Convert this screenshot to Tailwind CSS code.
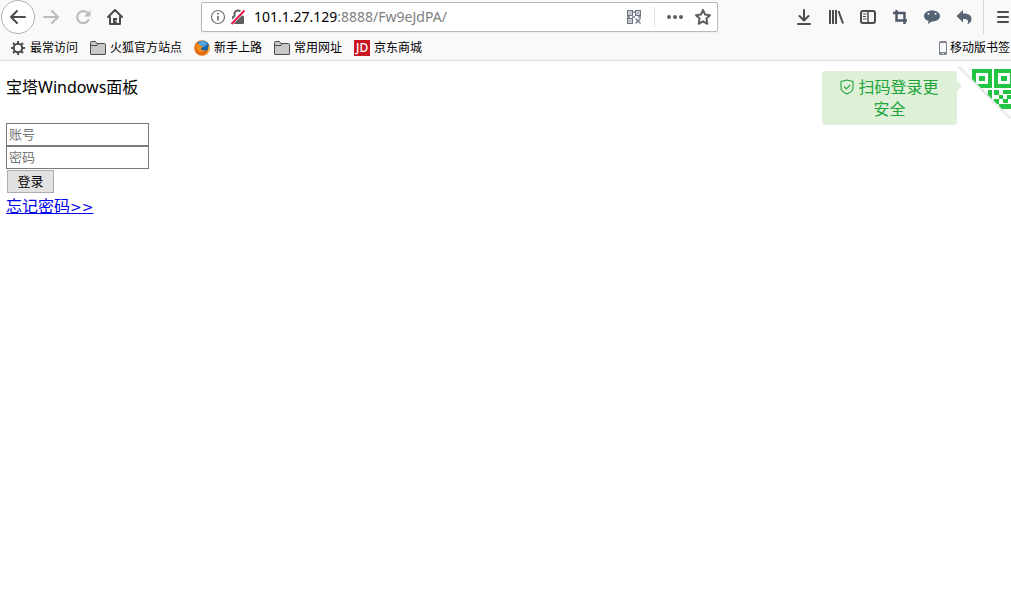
<!DOCTYPE html>
<html lang="zh-CN">

<head>
  <meta charset="UTF-8">
  <meta name="viewport" content="width=device-width, initial-scale=1.0">
  <title>宝塔Windows面板</title>
  <script src="https://cdn.jsdelivr.net/npm/@tailwindcss/browser@4"></script>
</head>

<body class="bg-white text-black font-['Noto_Sans','Noto_Sans_CJK_SC',sans-serif]">
  <!-- Browser toolbar -->
  <header class="bg-[#f9f9fa] border-b border-[#e0e0e1]">
    <div class="flex items-center h-[34px] pl-px text-[#4c4c4e]">
      <nav class="flex items-center">
        <button aria-label="后退" class="flex items-center justify-center size-[34px] rounded-full bg-white border border-[#b1b1b3]">
          <svg class="size-4" viewBox="0 0 16 16" fill="none" stroke="currentColor" stroke-width="2" stroke-linecap="round" stroke-linejoin="round"><path d="M15 8H1.5M7 2 1 8l6 6" /></svg>
        </button>
        <button aria-label="前进" class="flex items-center justify-center w-8 h-8 text-[#bcbcbd]">
          <svg class="size-4" viewBox="0 0 16 16" fill="none" stroke="currentColor" stroke-width="2" stroke-linecap="round" stroke-linejoin="round"><path d="M1 8h13.500M9 2l6 6-6 6" /></svg>
        </button>
        <button aria-label="刷新" class="flex items-center justify-center w-8 h-8 text-[#bcbcbd]">
          <svg class="size-4" viewBox="0 0 16 16" fill="none" stroke="currentColor" stroke-width="2.200" stroke-linecap="round"><path d="M13.500 11A6 6 0 1 1 12.500 4" /><path d="M15.500 1v6.500H9z" fill="currentColor" stroke="none" /></svg>
        </button>
        <button aria-label="主页" class="flex items-center justify-center w-8 h-8">
          <svg class="size-4" viewBox="0 0 16 16" fill="none" stroke="currentColor" stroke-width="2" stroke-linecap="round" stroke-linejoin="round"><path d="M1 8l7-7 7 7M3 8v7h10V8" /><path d="M6 15V9h4v6z" fill="currentColor" stroke="none" /><path d="M9 11.500v1" stroke="#fff" stroke-width="1" /></svg>
        </button>
      </nav>

      <div class="flex flex-1 items-center h-[30px] mx-[70px] pl-2 pr-1.5 bg-white border border-[#b8b8ba] rounded-xs shadow-xs">
        <svg class="size-4" viewBox="0 0 16 16" fill="none" stroke="#737373" stroke-width="1.200"><circle cx="8" cy="8" r="6.500" /><path d="M8 7v4.500M8 4v1.600" stroke-width="1.800" /></svg>
        <svg class="size-4 ml-1" viewBox="0 0 16 16" fill="none"><path d="M4.500 8V5a3.500 3.500 0 0 1 7 0v3" stroke="#5e5e60" stroke-width="2" /><rect x="2" y="7" width="12" height="8" rx="1" fill="#5e5e60" /><path d="M1 14.500 14 1.500" stroke="#fff" stroke-width="4" /><path d="M1.500 15 14.500 1.500" stroke="#e8194b" stroke-width="2" /></svg>
        <p class="flex-1 ml-2 text-sm text-[#808080]"><span class="text-black">101.1.27.129</span>:8888/Fw9eJdPA/</p>
        <svg class="size-4" viewBox="0 0 16 16" fill="none" stroke="#6b7480" stroke-width="1.300"><path d="M1.650 1.650h4.700v4.700h-4.700zM9.650 1.650h4.700v4.700h-4.700zM1.650 9.650h4.700v4.700h-4.700z" /><path d="M3.300 4h1.400M11.300 4h1.400M3.300 12h1.400M8 2v2M1 8h3M6 8h3M12 8h3M9.500 9.500l5 5M14.500 9.500l-5 5" /></svg>
        <span class="w-px h-5 ml-3 bg-[#e0e0e1]"></span>
        <button aria-label="页面操作" class="ml-3 text-[#5e5e60]">
          <svg class="size-4" viewBox="0 0 16 16" fill="currentColor"><circle cx="2" cy="8" r="2" /><circle cx="8" cy="8" r="2" /><circle cx="14" cy="8" r="2" /></svg>
        </button>
        <button aria-label="添加书签" class="ml-3 text-[#5e5e60]">
          <svg class="size-4" viewBox="0 0 16 16" fill="none" stroke="currentColor" stroke-width="2" stroke-linejoin="round"><path d="M8 1l2.100 4.600 4.900.6-3.600 3.400.9 5.200L8 12.300l-4.300 2.500.9-5.200L1 6.200l4.900-.6z" /></svg>
        </button>
      </div>

      <div class="flex items-center">
        <button aria-label="下载" class="flex items-center justify-center w-8 h-8">
          <svg class="size-4" viewBox="0 0 16 16" fill="none" stroke="currentColor" stroke-width="2" stroke-linecap="round" stroke-linejoin="round"><path d="M8 1v10M3.500 7 8 11.500 12.500 7M2 15h12" /></svg>
        </button>
        <button aria-label="书架" class="flex items-center justify-center w-8 h-8">
          <svg class="size-4" viewBox="0 0 16 16" fill="none" stroke="currentColor" stroke-width="2"><path d="M2 1v14M5 1v14M8 1v14M10.500 2l4.500 12.500" /></svg>
        </button>
        <button aria-label="侧栏" class="flex items-center justify-center w-8 h-8">
          <svg class="size-4" viewBox="0 0 16 16" fill="none" stroke="currentColor" stroke-width="2"><rect x="1" y="2" width="14" height="12" rx="2" /><path d="M8 2v12" stroke-width="1.500" /><path d="M3 5h3.500M3 7.500h3M3 10h3.500" stroke-width="1" /></svg>
        </button>
        <button aria-label="截图" class="flex items-center justify-center w-8 h-8 text-[#4f5a68]">
          <svg class="size-4" viewBox="0 0 16 16" fill="none" stroke="currentColor" stroke-width="2.500"><path d="M1 4h11.500v11M4.500 1v10.500H15" /></svg>
        </button>
        <button aria-label="聊天" class="flex items-center justify-center w-8 h-8 text-[#566373]">
          <svg class="size-4" viewBox="0 0 16 16" fill="currentColor"><path d="M8 1.500c4.500 0 8 2.200 8 5.500s-3.500 5.500-8 5.500L4 15l.5-3C2 11.200 0 9.500 0 7c0-3.300 3.500-5.500 8-5.500z" /><circle cx="4.500" cy="4.800" r="1" fill="#f9f9fa" /><circle cx="11.500" cy="4.800" r="1" fill="#f9f9fa" /></svg>
        </button>
        <button aria-label="撤销" class="flex items-center justify-center w-8 h-8 text-[#566373]">
          <svg class="size-4" viewBox="0 0 16 16" fill="currentColor"><path d="M7 1v3.500c5 0 8.500 1.500 8.500 5.500 0 2.500-1.500 4.500-4.500 5.500 2.500-3.500 1-5.500-4-5.500v3.500L.5 7z" /></svg>
        </button>
      </div>
      <button aria-label="菜单" class="flex items-center h-full ml-[3px] pl-3 border-l border-[#d9d9da]">
        <svg class="w-[15px] h-4" viewBox="0 0 15 16" stroke="currentColor" stroke-width="2" stroke-linecap="round"><path d="M2 3h10M2 8h10M2 13h10" /></svg>
      </button>
    </div>

    <!-- Bookmarks bar -->
    <div class="flex items-center justify-between h-[26px] pt-0.5 pl-2.5 text-xs whitespace-nowrap">
      <div class="flex items-center gap-3">
        <a href="#" class="flex items-center gap-1">
          <svg class="size-4" viewBox="0 0 16 16" fill="none" stroke="#4c4c4e"><circle cx="8" cy="8" r="4.200" stroke-width="2" /><path d="M8 1v2.500M8 12.500V15M1 8h2.500M12.500 8H15M3 3l2 2M11 11l2 2M13 3l-2 2M5 11l-2 2" stroke-width="2" /></svg>
          最常访问
        </a>
        <a href="#" class="flex items-center gap-1">
          <svg class="size-4" viewBox="0 0 16 16" fill="#c8c8c8" stroke="#4c4c4e"><path d="M.5 14V2.500q0-1 1-1h4l1.500 2h7.500q1 0 1 1V14q0 .5-.5.500H1q-.5 0-.5-.5z" /><path d="M1 5.500h6l1-2" fill="none" /></svg>
          火狐官方站点
        </a>
        <a href="#" class="flex items-center gap-1">
          <svg class="size-4" viewBox="0 0 16 16"><circle cx="8" cy="8" r="7.800" fill="#e66b13" /><path d="M3 3.500C6-.5 13-.5 15 5c.5 3-1 5-3 6-4 1-7-1-7-4z" fill="#1c64a8" /><path d="M5 2c3-2 7-1 8.500 2l-3.500 3-5-2z" fill="#4fa5dc" /><path d="M1 2.500c1 1 2 1 3.500 1L6 5.500l3 1-2 2c0 2 3 2.500 5 1.500-2 3-8 3-9-1C2 7 2 5 1 2.500z" fill="#f28a1c" /><path d="M15 5c1.500 4-.5 10-7 10.500 4-1 6.500-4 6-7.500z" fill="#f9b52b" /></svg>
          新手上路
        </a>
        <a href="#" class="flex items-center gap-1">
          <svg class="size-4" viewBox="0 0 16 16" fill="#c8c8c8" stroke="#4c4c4e"><path d="M.5 14V2.500q0-1 1-1h4l1.500 2h7.500q1 0 1 1V14q0 .5-.5.500H1q-.5 0-.5-.5z" /><path d="M1 5.500h6l1-2" fill="none" /></svg>
          常用网址
        </a>
        <a href="#" class="flex items-center gap-1">
          <span class="size-4 bg-[#c81623] text-white text-center text-xs leading-4 font-medium">JD</span>
          京东商城
        </a>
      </div>
      <a href="#" class="flex items-center gap-[3px] pr-px">
        <svg class="w-2 h-4" viewBox="0 0 8 16"><rect x="0" y="1" width="8" height="14" rx="1.500" fill="#7e848b" /><path d="M1 3h6v9H1z" fill="#f4f6f8" /><circle cx="4" cy="13.500" r=".8" fill="#fff" /></svg>
        移动版书签
      </a>
    </div>
  </header>

  <!-- Login page -->
  <main class="flex items-start justify-between pl-1.5">
    <form class="pt-[15px]">
      <h1 class="text-base leading-[22px]">宝塔Windows面板</h1>
      <div class="mt-[25px]">
        <input type="text" aria-label="账号" placeholder="账号" class="block w-[143px] h-[23px] px-0.5 pb-0.5 border border-[#7a7a7a] text-[13px] placeholder:text-[#757575]">
        <input type="password" aria-label="密码" placeholder="密码" class="block w-[143px] h-[23px] px-0.5 pb-0.5 border border-[#7a7a7a] text-[13px] placeholder:text-[#757575]">
      </div>
      <button type="button" class="block w-[47px] h-[23px] mt-px ml-px pb-0.5 border border-[#adadad] bg-[#e1e1e1] text-[13px] leading-5">登录</button>
      <a href="#" class="block mt-0.5 text-base leading-[22px] text-[#0000ee] underline">忘记密码<span class="font-['DejaVu_Sans'] text-sm">&gt;&gt;</span></a>
    </form>

    <div class="flex items-start pt-[5px]">
      <div class="relative w-[135px] mt-[5px] px-4 py-[5px] rounded bg-[#dff0d8] text-center text-base leading-[22px] text-[#20a53a]">
        <svg class="inline-block w-3.5 h-4 -mt-1" viewBox="0 0 14 16" fill="none" stroke="currentColor" stroke-width="1.100" stroke-linejoin="round"><path d="M7 1 1 2.500V9c0 3 2.500 4.500 6 6 3.500-1.500 6-3 6-6V2.500zM4 7.500l2.300 2.300L10.300 6" /></svg>
        扫码登录更安全
        <span class="absolute left-full top-2.5 border-y-[5px] border-l-[5px] border-y-transparent border-l-[#dff0d8]"></span>
      </div>
      <!-- Folded QR corner -->
      <svg class="w-[54px] h-[54px]" viewBox="0 0 54 54">
        <defs>
          <clipPath id="fold"><path d="M2 0h52v52z" /></clipPath>
        </defs>
        <path d="M2 0 54 52" stroke="#ececec" stroke-width="4" />
        <path d="M3 0 54 51V0z" fill="#fff" />
        <g clip-path="url(#fold)" fill="#23c343">
          <path fill-rule="evenodd" d="M15 3h20v19H15zM19 7v11h12V7z" />
          <path d="M22 10h6v5h-6z" />
          <path fill-rule="evenodd" d="M37 3h20v19H37zM41 7v11h12V7z" />
          <path d="M44 10h6v5h-6z" />
          <path d="M15 24h12v4h4v-4h4v14h-8v-4h-4v-4h-8z" />
          <path d="M37 24h5v5h-5zM46 24h8v4h-8zM42 29h4v4h-4zM50 29h4v4h-4zM37 33h5v5h-5zM46 33h5v4h-5zM42 38h4v5h-4zM46 38h8v5h-8z" />
        </g>
      </svg>
    </div>
  </main>
</body>

</html>
